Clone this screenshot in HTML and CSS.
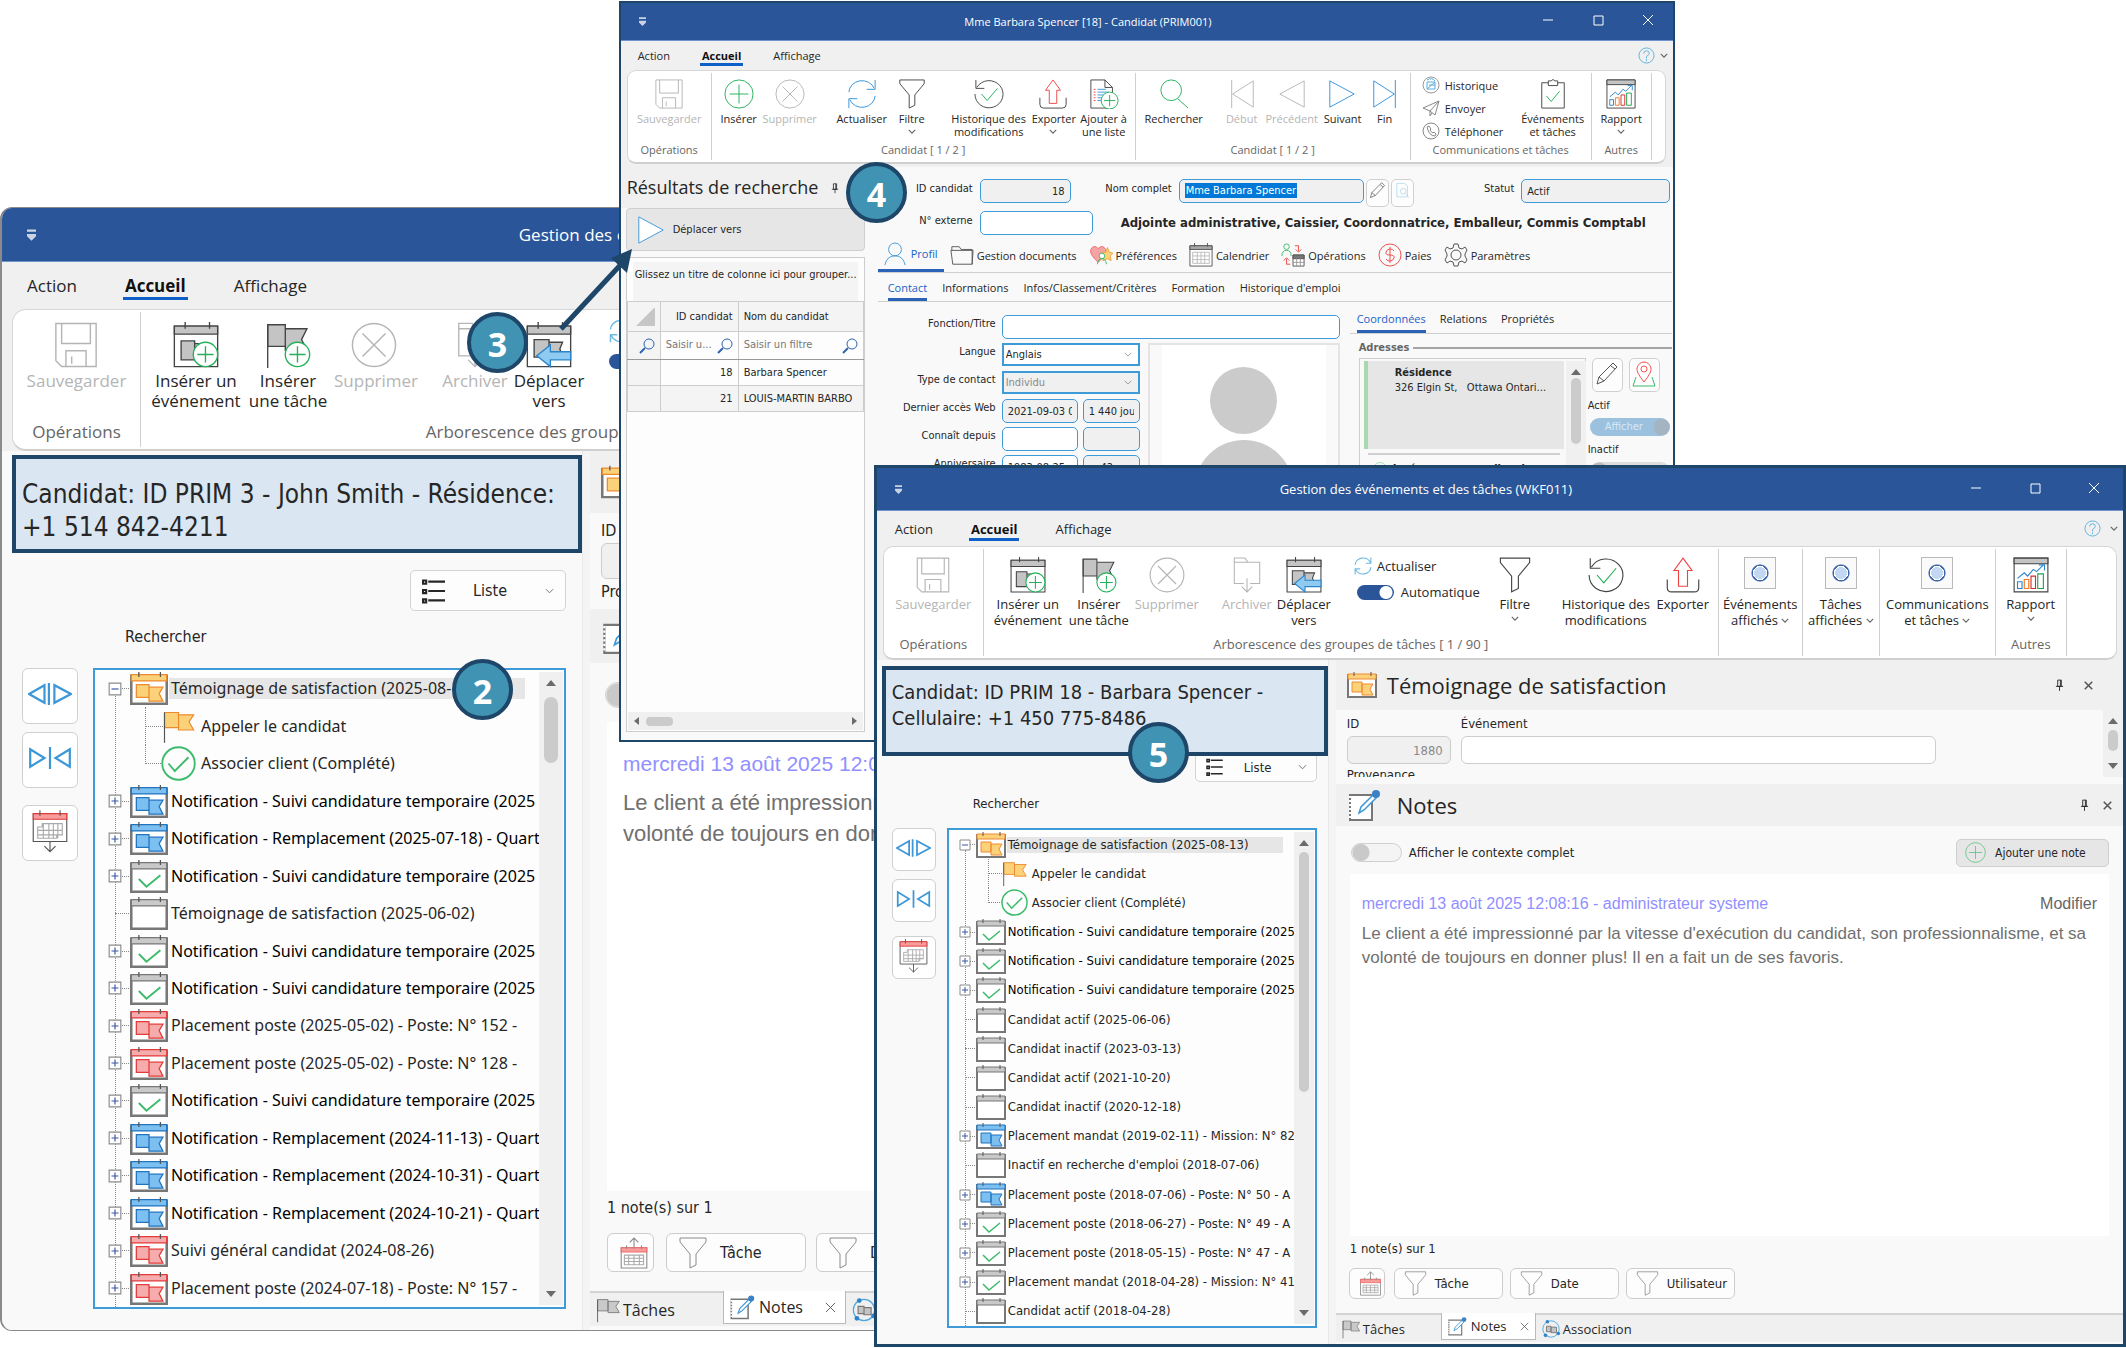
FILE: index.html
```html
<!DOCTYPE html>
<html lang="fr">
<head>
    <meta charset="UTF-8">
    <meta name="viewport" content="width=device-width, initial-scale=1.0">
    <title>Gestion des événements et des tâches</title>
    <link rel="stylesheet" href="styles.css">
</head>
<body>

    <!-- Icon set -->
    <svg class="sprite" aria-hidden="true">
        <symbol id="i-save" viewBox="0 0 32 32"><path d="M2 1h28v30H6l-4-4zM6 1v14h20V1M9 31V20h14v11M13 24v5"/></symbol>
        <symbol id="i-cancel" viewBox="0 0 32 32"><circle cx="16" cy="16" r="15"/><path d="M8 8l16 16M24 8L8 24"/></symbol>
        <symbol id="i-plus" viewBox="0 0 32 32"><circle cx="16" cy="16" r="15"/><path d="M16 6v20M6 16h20"/></symbol>
        <symbol id="i-cal-add" viewBox="0 0 34 34"><path fill="#fff" d="M1 3h32v30H1z"/><path fill="#c4c4c4" d="M1 3h32v6H1zM6 14h10v14H6zM16 16h10v9H16z"/><path d="M9 0v5M27 0v5"/><circle cx="24" cy="24" r="9" fill="#fff" stroke="#22b058"/><path stroke="#22b058" d="M24 18v12M18 24h12"/></symbol>
        <symbol id="i-flag-add" viewBox="0 0 34 34"><path fill="#c4c4c4" d="M2 2h13v16H2zM15 5h16l-4 8 4 8H15z"/><path d="M2 2v32"/><circle cx="24" cy="24" r="9" fill="#fff" stroke="#22b058"/><path stroke="#22b058" d="M24 18v12M18 24h12"/></symbol>
        <symbol id="i-archive" viewBox="0 0 32 34"><path d="M4 5V1h10l3 4h11v20h-9M13 25H4V5h24M16 20v12M11 28l5 5 5-5"/></symbol>
        <symbol id="i-cal-move" viewBox="0 0 34 34"><path fill="#fff" d="M1 3h32v30H1z"/><path fill="#c4c4c4" d="M1 3h32v6H1zM6 13h11v13H6zM17 15h10l-2 5 2 5H17z"/><path d="M9 0v5M27 0v5"/><path fill="#8fcaf0" stroke="#2b85cc" d="M8 25l10-8v5h15v6H18v5z"/></symbol>
        <symbol id="i-refresh" viewBox="0 0 32 32"><path d="M2 14A14 13 0 0 1 29 10M30 1v10H21M30 18A14 13 0 0 1 3 22M2 31V21h9"/></symbol>
        <symbol id="i-funnel" viewBox="0 0 32 32"><path d="M3 1h26v4L19 17v11l-6 3V17L3 5z"/></symbol>
        <symbol id="i-history" viewBox="0 0 32 32"><path d="M2 1v9h9M3 9A15 14.500 0 1 1 1 16"/><path stroke="#22b058" d="M8 16l6 7L25 10"/></symbol>
        <symbol id="i-export" viewBox="0 0 32 32"><path d="M2 20v7q0 4 4 4h20q4 0 4-4v-7"/><path stroke="#ef4444" d="M16 1l8 11h-4v14h-8V12H8z"/></symbol>
        <symbol id="i-doc-add" viewBox="0 0 32 32"><path d="M2 1h15l8 8v22H2zM17 1v8h8"/><path stroke="#3c97d8" d="M9 11h9M9 14h12M9 17h9M9 20h8M9 23h8"/><path stroke="#ef4444" d="M5 11h2M5 14h2M5 17h2M5 20h2M5 23h2"/><circle cx="22" cy="23" r="9" fill="#fff" stroke="#22b058"/><path stroke="#22b058" d="M22 17v12M16 23h12"/></symbol>
        <symbol id="i-search" viewBox="0 0 32 32"><circle cx="13" cy="12" r="11"/><path d="M20 21l11 10"/></symbol>
        <symbol id="i-filter-glass" viewBox="0 0 16 16"><circle cx="10" cy="6" r="5"/><path stroke-width="2" d="M6 10l-5 5"/></symbol>
        <symbol id="i-first" viewBox="0 0 32 32"><path d="M5 1v30M28 2v28L6 16z"/></symbol>
        <symbol id="i-prev" viewBox="0 0 32 32"><path d="M29 2v28L3 16z"/></symbol>
        <symbol id="i-next" viewBox="0 0 32 32"><path d="M3 2v28l26-14z"/></symbol>
        <symbol id="i-last" viewBox="0 0 32 32"><path d="M27 1v30M4 2v28l22-14z"/></symbol>
        <symbol id="i-clipboard" viewBox="0 0 32 32"><path d="M11 4H4v27h24V4h-7M11 2h3q2-3 4 0h3v5H11z"/><path stroke="#22b058" d="M9 18l5 6 9-11"/></symbol>
        <symbol id="i-report" viewBox="0 0 32 32"><path d="M1 1h30v30H1z"/><path fill="#c4c4c4" d="M1 1h30v5H1z"/><path stroke="#2b85cc" d="M4 22h4v6H4zM4 19l6-5 3 3 5-6 3 2 6-6M23 7h5v5"/><path stroke="#f0781e" d="M10 20h4v8h-4z"/><path stroke="#d92b2b" d="M16 17h4v11h-4z"/><path stroke="#22a050" d="M22 15h5v13h-5z"/></symbol>
        <symbol id="i-globe" viewBox="0 0 18 18"><circle cx="9" cy="9" r="8" stroke="#999"/><path stroke="#5badde" d="M5 6h8v7H5zM5 13l8-7M7 9h6M5 4q5-3 8 1"/></symbol>
        <symbol id="i-send" viewBox="0 0 18 18"><path d="M1 9l16-7-4 14-5-4zM17 2L8 12v5l2-3"/></symbol>
        <symbol id="i-phone" viewBox="0 0 18 18"><circle cx="9" cy="9" r="8"/><path d="M5 5l2-1 2 3-1 1q1 2 3 3l1-1 2 2-1 2Q7 14 5 5z"/></symbol>
        <symbol id="i-help" viewBox="0 0 18 18"><circle cx="9" cy="9" r="8"/><path d="M6 7q0-3 3-3t3 3q0 1-3 3v2M9 13v2"/></symbol>
        <symbol id="i-down" viewBox="0 0 10 6"><path d="M1 1l4 4 4-4"/></symbol>
        <symbol id="i-quick" viewBox="0 0 8 10"><path fill="currentColor" stroke="none" d="M0 0h8v2H0zM0 4h8v2L4 10 0 6z"/></symbol>
        <symbol id="i-min" viewBox="0 0 12 12"><path d="M1 6h10"/></symbol>
        <symbol id="i-max" viewBox="0 0 12 12"><path d="M2 2h9v9H2z"/></symbol>
        <symbol id="i-close" viewBox="0 0 12 12"><path d="M1 1l10 10M11 1L1 11"/></symbol>
        <symbol id="i-pin" viewBox="0 0 10 14"><path d="M3 1h4v7H3zM1 8h8M5 8v5M6 1v7"/></symbol>
        <symbol id="i-list" viewBox="0 0 22 24"><path d="M6 3h16M6 12h16M6 21h16M1 2h3v3H1zM1 11h3v3H1zM1 20h3v3H1z"/></symbol>
        <symbol id="i-split-out" viewBox="0 0 40 20"><path d="M1 10L15 2v16zM19 0v20M24 2v16l15-8z"/></symbol>
        <symbol id="i-split-in" viewBox="0 0 40 20"><path d="M2 2v16l13-8zM20 0v20M38 2v16l-13-8z"/></symbol>
        <symbol id="i-cal-down" viewBox="0 0 34 38"><path fill="#fff" d="M2 3h30v25H2z"/><path fill="#f79b9b" stroke="#e03a3a" d="M2 3h30v5H2z"/><path d="M8 0v5M26 0v5M17 28v9M12 32l5 5 5-5"/><path stroke="#aaa" d="M6 25V15h4v-3h18v10h-5v3zM6 18h22M6 22h22M11 12v13M16 12v13M20 12v13M24 12v13"/></symbol>
        <symbol id="i-cal-up" viewBox="0 0 28 30"><path fill="#fff" d="M2 10h24v19H2z"/><path fill="#f79b9b" stroke="#f06a6a" d="M2 10h24v4H2z"/><path d="M7 8v3M21 8v3M14 11V1M10 5l4-4 4 4"/><path stroke="#aaa" d="M5 26v-9h18v9zM5 20h18M5 23h18M9 17v9M14 17v9M19 17v9"/></symbol>
        <symbol id="i-box-minus" viewBox="0 0 12 12"><path fill="#fff" stroke="#8c8c8c" d="M1 1h10v10H1z"/><path stroke="#3a55a4" d="M3 6h6"/></symbol>
        <symbol id="i-box-plus" viewBox="0 0 12 12"><path fill="#fff" stroke="#8c8c8c" d="M1 1h10v10H1z"/><path stroke="#3a55a4" d="M3 6h6M6 3v6"/></symbol>
        <symbol id="i-cal" viewBox="0 0 30 26"><path fill="#fff" stroke="#777" stroke-width="2" d="M1 3h28v22H1z"/><path class="tone" d="M1 2h28v5H1z"/><path stroke="#555" d="M7 0v4M24 0v4"/></symbol>
        <symbol id="i-cal-flag" viewBox="0 0 30 26"><use href="#i-cal" width="30" height="26"/><path class="tone" d="M5 10h10v10H5zM15 12h11l-3 5 3 6H15z"/></symbol>
        <symbol id="i-cal-check" viewBox="0 0 30 26"><use href="#i-cal" width="30" height="26"/><path stroke="#3dbb6c" stroke-width="1.500" d="M7 15l6 6 11-9"/></symbol>
        <symbol id="i-flag" viewBox="0 0 30 28"><path class="tone" d="M3 2h12v13H3zM15 4h13l-4 6 4 7H15z"/><path stroke="#555" d="M3 2v26"/></symbol>
        <symbol id="i-done" viewBox="0 0 28 28"><circle cx="14" cy="14" r="13"/><path d="M6 14l5 6L22 9"/></symbol>
        <symbol id="i-note" viewBox="0 0 34 32"><path stroke="#777" fill="#fff" stroke-width="2" d="M3 6h22v25H3z"/><path stroke="#fff" stroke-dasharray="2 2" stroke-width="2" d="M3 7v23"/><path stroke="#3c97d8" fill="#fff" stroke-width="1.500" d="M12 24l2-6L26 6l3 3-12 12z"/><circle cx="29" cy="5" r="4" fill="#3b82c4" stroke="none"/></symbol>
        <symbol id="i-assoc" viewBox="0 0 22 22"><circle cx="11" cy="11" r="9" stroke="#4aa8e0"/><path fill="#c4c4c4" stroke="#777" d="M6 8h5v6H6zM11 9h6v6h-6z"/><circle cx="7" cy="3" r="2" fill="#2b85cc" stroke="none"/><circle cx="19" cy="16" r="2" fill="#2b85cc" stroke="none"/><circle cx="5" cy="18" r="2" fill="#2b85cc" stroke="none"/></symbol>
        <symbol id="i-user" viewBox="0 0 24 26"><circle cx="12" cy="8" r="7"/><path d="M1 25q2-10 11-10t11 10"/></symbol>
        <symbol id="i-folder" viewBox="0 0 26 22"><path d="M2 6V2h8l2 3h12v16H3L1 6h24l-1 15"/></symbol>
        <symbol id="i-heart" viewBox="0 0 26 24"><path fill="#f7a3a3" stroke="#ef6a6a" d="M10 20Q0 11 2 6q3-6 8-1 5-5 8 1 1 5-8 14z"/><path fill="#fbd27a" stroke="#f0a040" d="M20 4l2 5 4 1-3 3 1 5-4-2-5 2 1-5-3-3 5-1z"/><circle cx="14" cy="13" r="3" fill="#fff" stroke="#3dbb6c"/><path stroke="#3dbb6c" d="M9 22q1-6 5-6t5 6"/></symbol>
        <symbol id="i-calendar" viewBox="0 0 26 26"><path fill="#fff" d="M1 3h24v22H1z"/><path fill="#a9a9a9" d="M1 3h24v4H1z"/><path d="M6 0v4M20 0v4"/><path stroke="#bbb" d="M4 10h18v12H4zM4 14h18M4 18h18M9 10v12M13 10v12M17 10v12"/></symbol>
        <symbol id="i-ops" viewBox="0 0 26 26"><circle cx="6" cy="4" r="3" stroke="#3dbb6c"/><path stroke="#3dbb6c" d="M1 14q0-6 5-6t5 6"/><path stroke="#ef4444" d="M15 3h4v6M16 7l3 3 3-3M10 23H6v-6M3 19l3-3 3 3"/><path fill="#fff" d="M13 13h12v12H13z"/><path fill="#777" d="M13 13h12v4H13z"/><path stroke="#999" d="M17 17v8M21 17v8M13 21h12"/></symbol>
        <symbol id="i-dollar" viewBox="0 0 24 24"><circle cx="12" cy="12" r="11"/><path d="M16 8q-1-2-4-2t-4 3 4 3 4 3-4 3-4-2M12 4v16"/></symbol>
        <symbol id="i-gear" viewBox="0 0 24 24"><circle cx="12" cy="12" r="5"/><path d="M10 1h4l1 4 3 1 3-2 2 3-2 4v2l2 4-2 3-3-2-3 1-1 4h-4l-1-4-3-1-3 2-2-3 2-4v-2L1 7l2-3 3 2 3-1z"/></symbol>
        <symbol id="i-pencil" viewBox="0 0 24 24"><path d="M2 22l2-7L18 1l4 4L9 19zM4 15l5 4M16 4l4 3"/></symbol>
        <symbol id="i-doc-search" viewBox="0 0 24 24"><path d="M4 2h11l4 4v15H4z"/><circle cx="13" cy="13" r="4"/><path d="M16 16l5 6"/></symbol>
        <symbol id="i-map" viewBox="0 0 24 26"><path stroke="#3dbb6c" d="M4 16L1 25h22l-3-9"/><path stroke="#ef5350" fill="#fff" d="M12 21Q4 11 5 7q2-6 7-6t7 6q1 4-7 14z"/><circle cx="12" cy="8" r="3" stroke="#ef5350"/></symbol>
    </svg>

    <main class="desktop">

        <!-- Events window, John Smith -->
        <section class="window win-john">
            <header class="titlebar">
                <svg class="quick"><use href="#i-quick"/></svg>
                <h1>Gestion des événements et des tâches (WKF011)</h1>
            </header>
            <nav class="menu">
                <a href="#">Action</a>
                <a href="#" class="active">Accueil</a>
                <a href="#">Affichage</a>
            </nav>
            <div class="ribbon">
                <div class="group g-op">
                    <div class="tools"><button disabled><svg><use href="#i-save"/></svg>Sauvegarder</button></div>
                    <p>Opérations</p>
                </div>
                <div class="group g-tree">
                    <div class="tools">
                        <button><svg><use href="#i-cal-add"/></svg>Insérer un<br>événement</button>
                        <button><svg><use href="#i-flag-add"/></svg>Insérer<br>une tâche</button>
                        <button disabled><svg><use href="#i-cancel"/></svg>Supprimer</button>
                        <span></span>
                        <button disabled><svg><use href="#i-archive"/></svg>Archiver</button>
                        <button><svg><use href="#i-cal-move"/></svg>Déplacer<br>vers</button>
                        <span></span>
                        <div class="stack">
                            <button class="sky"><svg><use href="#i-refresh"/></svg></button>
                            <input type="checkbox" class="switch" checked aria-label="Automatique">
                        </div>
                    </div>
                    <p>Arborescence des groupes de tâches [ 1 / 90 ]</p>
                </div>
            </div>
            <div class="content">
                <div class="left">
                    <div class="callout">Candidat: ID PRIM 3 - John Smith - Résidence:<br>+1 514 842-4211</div>
                    <button class="list-btn"><svg><use href="#i-list"/></svg>Liste<svg class="down"><use href="#i-down"/></svg></button>
                    <p class="search-label">Rechercher</p>
                    <div class="tree-area">
                        <div class="rail">
                            <button aria-label="Développer"><svg><use href="#i-split-out"/></svg></button>
                            <button aria-label="Réduire"><svg><use href="#i-split-in"/></svg></button>
                            <button aria-label="Calendrier" class="cal-btn"><svg><use href="#i-cal-down"/></svg></button>
                        </div>
                        <div class="tree">
                            <ul>
                                <li><svg class="box"><use href="#i-box-minus"/></svg><svg class="orange"><use href="#i-cal-flag"/></svg><span class="selected">Témoignage de satisfaction (2025-08-13)</span></li>
                                <li class="child"><svg class="orange"><use href="#i-flag"/></svg><span>Appeler le candidat</span></li>
                                <li class="child last"><svg class="green"><use href="#i-done"/></svg><span>Associer client (Complété)</span></li>
                                <li class="bold"><svg class="box"><use href="#i-box-plus"/></svg><svg class="blue"><use href="#i-cal-flag"/></svg><span>Notification - Suivi candidature temporaire (2025</span></li>
                                <li class="bold"><svg class="box"><use href="#i-box-plus"/></svg><svg class="blue"><use href="#i-cal-flag"/></svg><span>Notification - Remplacement (2025-07-18) - Quart</span></li>
                                <li class="bold"><svg class="box"><use href="#i-box-plus"/></svg><svg class="grey"><use href="#i-cal-check"/></svg><span>Notification - Suivi candidature temporaire (2025</span></li>
                                <li class="leaf"><svg class="grey"><use href="#i-cal"/></svg><span>Témoignage de satisfaction (2025-06-02)</span></li>
                                <li class="bold"><svg class="box"><use href="#i-box-plus"/></svg><svg class="grey"><use href="#i-cal-check"/></svg><span>Notification - Suivi candidature temporaire (2025</span></li>
                                <li class="bold"><svg class="box"><use href="#i-box-plus"/></svg><svg class="grey"><use href="#i-cal-check"/></svg><span>Notification - Suivi candidature temporaire (2025</span></li>
                                <li><svg class="box"><use href="#i-box-plus"/></svg><svg class="red"><use href="#i-cal-flag"/></svg><span>Placement poste (2025-05-02) - Poste: N° 152 -</span></li>
                                <li><svg class="box"><use href="#i-box-plus"/></svg><svg class="red"><use href="#i-cal-flag"/></svg><span>Placement poste (2025-05-02) - Poste: N° 128 -</span></li>
                                <li class="bold"><svg class="box"><use href="#i-box-plus"/></svg><svg class="grey"><use href="#i-cal-check"/></svg><span>Notification - Suivi candidature temporaire (2025</span></li>
                                <li class="bold"><svg class="box"><use href="#i-box-plus"/></svg><svg class="blue"><use href="#i-cal-flag"/></svg><span>Notification - Remplacement (2024-11-13) - Quart</span></li>
                                <li class="bold"><svg class="box"><use href="#i-box-plus"/></svg><svg class="blue"><use href="#i-cal-flag"/></svg><span>Notification - Remplacement (2024-10-31) - Quart</span></li>
                                <li class="bold"><svg class="box"><use href="#i-box-plus"/></svg><svg class="blue"><use href="#i-cal-flag"/></svg><span>Notification - Remplacement (2024-10-21) - Quart</span></li>
                                <li><svg class="box"><use href="#i-box-plus"/></svg><svg class="red"><use href="#i-cal-flag"/></svg><span>Suivi général candidat (2024-08-26)</span></li>
                                <li><svg class="box"><use href="#i-box-plus"/></svg><svg class="red"><use href="#i-cal-flag"/></svg><span>Placement poste (2024-07-18) - Poste: N° 157 -</span></li>
                            </ul>
                            <div class="vscroll"><i></i></div>
                        </div>
                    </div>
                </div>
                <div class="splitter"></div>
                <div class="right">
                    <div class="panel-head"><svg class="orange"><use href="#i-cal-flag"/></svg></div>
                    <div class="event-form">
                        <div class="field id"><label for="john-id">ID</label><input id="john-id" readonly></div>
                        <p class="cut">Provenance</p>
                    </div>
                    <div class="panel-head notes-head"><svg><use href="#i-note"/></svg></div>
                    <div class="note-tools"><input type="checkbox" class="switch" aria-label="Afficher le contexte complet"></div>
                    <article class="note">
                        <h3>mercredi 13 août 2025 12:08</h3>
                        <p>Le client a été impressionné<br>volonté de toujours en donner</p>
                    </article>
                    <p class="count">1 note(s) sur 1</p>
                    <div class="filters">
                        <button class="square" aria-label="Calendrier"><svg><use href="#i-cal-up"/></svg></button>
                        <button><svg><use href="#i-funnel"/></svg>Tâche</button>
                        <button><svg><use href="#i-funnel"/></svg>Date</button>
                    </div>
                    <nav class="tabs">
                        <a href="#"><svg class="grey"><use href="#i-flag"/></svg>Tâches</a>
                        <a href="#" class="active"><svg><use href="#i-note"/></svg>Notes<svg class="x"><use href="#i-close"/></svg></a>
                        <a href="#"><svg><use href="#i-assoc"/></svg></a>
                    </nav>
                </div>
            </div>
        </section>

        <!-- Candidate window -->
        <section class="window win-candidate">
            <header class="titlebar">
                <svg class="quick"><use href="#i-quick"/></svg>
                <h1>Mme Barbara Spencer [18] - Candidat (PRIM001)</h1>
                <div class="controls">
                    <button aria-label="Réduire"><svg><use href="#i-min"/></svg></button>
                    <button aria-label="Agrandir"><svg><use href="#i-max"/></svg></button>
                    <button aria-label="Fermer"><svg><use href="#i-close"/></svg></button>
                </div>
            </header>
            <nav class="menu">
                <a href="#">Action</a>
                <a href="#" class="active">Accueil</a>
                <a href="#">Affichage</a>
                <span class="help"><svg><use href="#i-help"/></svg><svg class="down"><use href="#i-down"/></svg></span>
            </nav>
            <div class="ribbon">
                <div class="group g-op">
                    <div class="tools"><button disabled><svg><use href="#i-save"/></svg>Sauvegarder</button></div>
                    <p>Opérations</p>
                </div>
                <div class="group g-cand">
                    <div class="tools">
                        <button class="green"><svg><use href="#i-plus"/></svg>Insérer</button>
                        <button disabled><svg><use href="#i-cancel"/></svg>Supprimer</button>
                        <span></span>
                        <button class="blue"><svg><use href="#i-refresh"/></svg>Actualiser</button>
                        <button><svg><use href="#i-funnel"/></svg>Filtre<svg class="down"><use href="#i-down"/></svg></button>
                        <span></span>
                        <button><svg><use href="#i-history"/></svg>Historique des<br>modifications</button>
                        <button><svg><use href="#i-export"/></svg>Exporter<svg class="down"><use href="#i-down"/></svg></button>
                        <button><svg><use href="#i-doc-add"/></svg>Ajouter à<br>une liste</button>
                    </div>
                    <p>Candidat [ 1 / 2 ]</p>
                </div>
                <div class="group g-nav">
                    <div class="tools">
                        <button class="green"><svg><use href="#i-search"/></svg>Rechercher</button>
                        <span></span>
                        <button disabled><svg><use href="#i-first"/></svg>Début</button>
                        <button disabled><svg><use href="#i-prev"/></svg>Précédent</button>
                        <button class="blue"><svg><use href="#i-next"/></svg>Suivant</button>
                        <button class="blue"><svg><use href="#i-last"/></svg>Fin</button>
                    </div>
                    <p>Candidat [ 1 / 2 ]</p>
                </div>
                <div class="group g-com">
                    <div class="tools">
                        <div class="stack">
                            <button><svg><use href="#i-globe"/></svg>Historique</button>
                            <button class="soft"><svg><use href="#i-send"/></svg>Envoyer</button>
                            <button class="soft"><svg><use href="#i-phone"/></svg>Téléphoner</button>
                        </div>
                        <button><svg><use href="#i-clipboard"/></svg>Événements<br>et tâches</button>
                    </div>
                    <p>Communications et tâches</p>
                </div>
                <div class="group g-rep">
                    <div class="tools"><button><svg><use href="#i-report"/></svg>Rapport<svg class="down"><use href="#i-down"/></svg></button></div>
                    <p>Autres</p>
                </div>
            </div>
            <div class="content">
                <div class="results">
                    <h2>Résultats de recherche <svg><use href="#i-pin"/></svg></h2>
                    <button class="move"><svg><use href="#i-next"/></svg>Déplacer vers</button>
                    <div class="grid-box">
                        <p class="group-hint">Glissez un titre de colonne ici pour grouper...</p>
                        <table>
                            <thead>
                                <tr><th class="corner"><i></i></th><th class="num">ID candidat</th><th>Nom du candidat</th></tr>
                                <tr class="filter"><td class="rowhead"><svg><use href="#i-filter-glass"/></svg></td><td>Saisir u... <svg><use href="#i-filter-glass"/></svg></td><td>Saisir un filtre <svg><use href="#i-filter-glass"/></svg></td></tr>
                            </thead>
                            <tbody>
                                <tr><td class="rowhead"></td><td class="num">18</td><td>Barbara Spencer</td></tr>
                                <tr class="alt"><td class="rowhead"></td><td class="num">21</td><td>LOUIS-MARTIN BARBO</td></tr>
                            </tbody>
                        </table>
                        <div class="hscroll"><i></i></div>
                    </div>
                </div>
                <div class="details">
                    <div class="ident">
                        <label for="cid">ID candidat</label><input id="cid" class="num" value="18" readonly>
                        <label for="cname">Nom complet</label>
                        <div class="pair">
                            <div class="namebox" id="cname" role="textbox"><mark>Mme Barbara Spencer</mark></div>
                            <button aria-label="Modifier"><svg><use href="#i-pencil"/></svg></button>
                            <button aria-label="Aperçu" class="sky"><svg><use href="#i-doc-search"/></svg></button>
                        </div>
                        <label for="cstat">Statut</label><input id="cstat" value="Actif" readonly>
                    </div>
                    <div class="ident second">
                        <label for="cext">N° externe</label><input id="cext">
                        <strong>Adjointe administrative, Caissier, Coordonnatrice, Emballeur, Commis Comptabl</strong>
                    </div>
                    <nav class="main-tabs">
                        <a href="#" class="active"><svg><use href="#i-user"/></svg>Profil</a>
                        <a href="#"><svg><use href="#i-folder"/></svg>Gestion documents</a>
                        <a href="#"><svg><use href="#i-heart"/></svg>Préférences</a>
                        <a href="#"><svg><use href="#i-calendar"/></svg>Calendrier</a>
                        <a href="#"><svg><use href="#i-ops"/></svg>Opérations</a>
                        <a href="#" class="pay"><svg><use href="#i-dollar"/></svg>Paies</a>
                        <a href="#"><svg><use href="#i-gear"/></svg>Paramètres</a>
                    </nav>
                    <nav class="sub-tabs">
                        <a href="#" class="active">Contact</a>
                        <a href="#">Informations</a>
                        <a href="#">Infos/Classement/Critères</a>
                        <a href="#">Formation</a>
                        <a href="#">Historique d'emploi</a>
                    </nav>
                    <div class="profile">
                        <div class="form">
                            <label for="f1">Fonction/Titre</label><input id="f1" class="wide">
                            <label for="f2">Langue</label><select id="f2"><option>Anglais</option></select>
                            <label for="f3">Type de contact</label><select id="f3" disabled><option>Individu</option></select>
                            <label for="f4">Dernier accès Web</label><div class="two"><input id="f4" value="2021-09-03 08:15" readonly><input value="1 440 jours" aria-label="Jours" readonly></div>
                            <label for="f5">Connaît depuis</label><div class="two"><input id="f5"><input aria-label="Durée" readonly></div>
                            <label for="f6">Anniversaire</label><div class="two"><input id="f6" value="1983-08-25"><input class="num" value="42 ans" aria-label="Âge" readonly></div>
                            <div class="photo"><div><i></i><b></b></div></div>
                        </div>
                        <div class="coords">
                            <nav class="sub-tabs">
                                <a href="#" class="active">Coordonnées</a>
                                <a href="#">Relations</a>
                                <a href="#">Propriétés</a>
                            </nav>
                            <h4>Adresses</h4>
                            <div class="addr-row">
                                <div class="addr-list">
                                    <div class="items">
                                        <div class="item"><b>Résidence</b><br>326 Elgin St, &nbsp; Ottawa Ontari...</div>
                                        <div class="more"><svg><use href="#i-plus"/></svg>Insérer une nouvelle adresse</div>
                                    </div>
                                    <div class="vscroll"><i></i></div>
                                </div>
                                <div class="addr-side">
                                    <button aria-label="Modifier"><svg><use href="#i-pencil"/></svg></button>
                                    <button aria-label="Carte"><svg><use href="#i-map"/></svg></button>
                                    <p>Actif</p>
                                    <button class="pill">Afficher</button>
                                    <p>Inactif</p>
                                    <button class="pill off" aria-label="Inactif"></button>
                                </div>
                            </div>
                        </div>
                    </div>
                </div>
            </div>
        </section>

        <!-- Events window, Barbara Spencer -->
        <section class="window win-barbara">
            <header class="titlebar">
                <svg class="quick"><use href="#i-quick"/></svg>
                <h1>Gestion des événements et des tâches (WKF011)</h1>
                <div class="controls">
                    <button aria-label="Réduire"><svg><use href="#i-min"/></svg></button>
                    <button aria-label="Agrandir"><svg><use href="#i-max"/></svg></button>
                    <button aria-label="Fermer"><svg><use href="#i-close"/></svg></button>
                </div>
            </header>
            <nav class="menu">
                <a href="#">Action</a>
                <a href="#" class="active">Accueil</a>
                <a href="#">Affichage</a>
                <span class="help"><svg><use href="#i-help"/></svg><svg class="down"><use href="#i-down"/></svg></span>
            </nav>
            <div class="ribbon">
                <div class="group g-op">
                    <div class="tools"><button disabled><svg><use href="#i-save"/></svg>Sauvegarder</button></div>
                    <p>Opérations</p>
                </div>
                <div class="group g-tree">
                    <div class="tools">
                        <button><svg><use href="#i-cal-add"/></svg>Insérer un<br>événement</button>
                        <button><svg><use href="#i-flag-add"/></svg>Insérer<br>une tâche</button>
                        <button disabled><svg><use href="#i-cancel"/></svg>Supprimer</button>
                        <span></span>
                        <button disabled><svg><use href="#i-archive"/></svg>Archiver</button>
                        <button><svg><use href="#i-cal-move"/></svg>Déplacer<br>vers</button>
                        <span></span>
                        <div class="stack">
                            <button class="sky"><svg><use href="#i-refresh"/></svg>Actualiser</button>
                            <label><input type="checkbox" class="switch" checked>Automatique</label>
                        </div>
                        <button><svg><use href="#i-funnel"/></svg>Filtre<svg class="down"><use href="#i-down"/></svg></button>
                        <span></span>
                        <button><svg><use href="#i-history"/></svg>Historique des<br>modifications</button>
                        <button><svg><use href="#i-export"/></svg>Exporter</button>
                    </div>
                    <p>Arborescence des groupes de tâches [ 1 / 90 ]</p>
                </div>
                <div class="group g-ev">
                    <div class="tools"><button><i class="dot"></i>Événements<br>affichés <svg class="down"><use href="#i-down"/></svg></button></div>
                </div>
                <div class="group g-ta">
                    <div class="tools"><button><i class="dot"></i>Tâches<br>affichées <svg class="down"><use href="#i-down"/></svg></button></div>
                </div>
                <div class="group g-co">
                    <div class="tools"><button><i class="dot"></i>Communications<br>et tâches <svg class="down"><use href="#i-down"/></svg></button></div>
                </div>
                <div class="group g-rep">
                    <div class="tools"><button><svg><use href="#i-report"/></svg>Rapport<br><svg class="down"><use href="#i-down"/></svg></button></div>
                    <p>Autres</p>
                </div>
            </div>
            <div class="content">
                <div class="left">
                    <div class="callout">Candidat: ID PRIM 18 - Barbara Spencer -<br>Cellulaire: +1 450 775-8486</div>
                    <button class="list-btn"><svg><use href="#i-list"/></svg>Liste<svg class="down"><use href="#i-down"/></svg></button>
                    <p class="search-label">Rechercher</p>
                    <div class="tree-area">
                        <div class="rail">
                            <button aria-label="Développer"><svg><use href="#i-split-out"/></svg></button>
                            <button aria-label="Réduire"><svg><use href="#i-split-in"/></svg></button>
                            <button aria-label="Calendrier" class="cal-btn"><svg><use href="#i-cal-down"/></svg></button>
                        </div>
                        <div class="tree">
                            <ul>
                                <li><svg class="box"><use href="#i-box-minus"/></svg><svg class="orange"><use href="#i-cal-flag"/></svg><span class="selected">Témoignage de satisfaction (2025-08-13)</span></li>
                                <li class="child"><svg class="orange"><use href="#i-flag"/></svg><span>Appeler le candidat</span></li>
                                <li class="child last"><svg class="green"><use href="#i-done"/></svg><span>Associer client (Complété)</span></li>
                                <li class="bold"><svg class="box"><use href="#i-box-plus"/></svg><svg class="grey"><use href="#i-cal-check"/></svg><span>Notification - Suivi candidature temporaire (2025</span></li>
                                <li class="bold"><svg class="box"><use href="#i-box-plus"/></svg><svg class="grey"><use href="#i-cal-check"/></svg><span>Notification - Suivi candidature temporaire (2025</span></li>
                                <li class="bold"><svg class="box"><use href="#i-box-plus"/></svg><svg class="grey"><use href="#i-cal-check"/></svg><span>Notification - Suivi candidature temporaire (2025</span></li>
                                <li class="leaf"><svg class="grey"><use href="#i-cal"/></svg><span>Candidat actif (2025-06-06)</span></li>
                                <li class="leaf"><svg class="grey"><use href="#i-cal"/></svg><span>Candidat inactif (2023-03-13)</span></li>
                                <li class="leaf"><svg class="grey"><use href="#i-cal"/></svg><span>Candidat actif (2021-10-20)</span></li>
                                <li class="leaf"><svg class="grey"><use href="#i-cal"/></svg><span>Candidat inactif (2020-12-18)</span></li>
                                <li><svg class="box"><use href="#i-box-plus"/></svg><svg class="blue"><use href="#i-cal-flag"/></svg><span>Placement mandat (2019-02-11) - Mission: N° 82</span></li>
                                <li class="leaf"><svg class="grey"><use href="#i-cal"/></svg><span>Inactif en recherche d'emploi (2018-07-06)</span></li>
                                <li><svg class="box"><use href="#i-box-plus"/></svg><svg class="blue"><use href="#i-cal-flag"/></svg><span>Placement poste (2018-07-06) - Poste: N° 50 - A</span></li>
                                <li><svg class="box"><use href="#i-box-plus"/></svg><svg class="grey"><use href="#i-cal-check"/></svg><span>Placement poste (2018-06-27) - Poste: N° 49 - A</span></li>
                                <li><svg class="box"><use href="#i-box-plus"/></svg><svg class="grey"><use href="#i-cal-check"/></svg><span>Placement poste (2018-05-15) - Poste: N° 47 - A</span></li>
                                <li><svg class="box"><use href="#i-box-plus"/></svg><svg class="grey"><use href="#i-cal-check"/></svg><span>Placement mandat (2018-04-28) - Mission: N° 41</span></li>
                                <li class="leaf"><svg class="grey"><use href="#i-cal"/></svg><span>Candidat actif (2018-04-28)</span></li>
                            </ul>
                            <div class="vscroll"><i></i></div>
                        </div>
                    </div>
                </div>
                <div class="splitter"></div>
                <div class="right">
                    <div class="panel-head">
                        <svg class="orange"><use href="#i-cal-flag"/></svg>
                        <h2>Témoignage de satisfaction</h2>
                        <svg class="pin"><use href="#i-pin"/></svg>
                        <svg class="x"><use href="#i-close"/></svg>
                    </div>
                    <div class="event-form">
                        <div class="field id"><label for="ev-id">ID</label><input id="ev-id" value="1880" readonly></div>
                        <div class="field name"><label for="ev-name">Événement</label><input id="ev-name"></div>
                        <div class="vscroll"><i></i></div>
                        <p class="cut">Provenance</p>
                    </div>
                    <div class="panel-head notes-head">
                        <svg><use href="#i-note"/></svg>
                        <h2>Notes</h2>
                        <svg class="pin"><use href="#i-pin"/></svg>
                        <svg class="x"><use href="#i-close"/></svg>
                    </div>
                    <div class="note-tools">
                        <label><input type="checkbox" class="switch">Afficher le contexte complet</label>
                        <button><svg><use href="#i-plus"/></svg>Ajouter une note</button>
                    </div>
                    <article class="note">
                        <h3>mercredi 13 août 2025 12:08:16 - administrateur systeme <a href="#">Modifier</a></h3>
                        <p>Le client a été impressionné par la vitesse d'exécution du candidat, son professionnalisme, et sa volonté de toujours en donner plus! Il en a fait un de ses favoris.</p>
                    </article>
                    <p class="count">1 note(s) sur 1</p>
                    <div class="filters">
                        <button class="square" aria-label="Calendrier"><svg><use href="#i-cal-up"/></svg></button>
                        <button><svg><use href="#i-funnel"/></svg>Tâche</button>
                        <button><svg><use href="#i-funnel"/></svg>Date</button>
                        <button><svg><use href="#i-funnel"/></svg>Utilisateur</button>
                    </div>
                    <nav class="tabs">
                        <a href="#"><svg class="grey"><use href="#i-flag"/></svg>Tâches</a>
                        <a href="#" class="active"><svg><use href="#i-note"/></svg>Notes<svg class="x"><use href="#i-close"/></svg></a>
                        <a href="#"><svg><use href="#i-assoc"/></svg>Association</a>
                    </nav>
                </div>
            </div>
        </section>

        <!-- Step markers -->
        <svg class="arrow" viewBox="0 0 80 90"><path d="M5 83L69 14"/><path class="tip" d="M76 3L55 12l16 15z"/></svg>
        <span class="badge b2">2</span>
        <span class="badge b3">3</span>
        <span class="badge b4">4</span>
        <span class="badge b5">5</span>
    </main>

</body>
</html>
```
FILE: styles.css
```css
* {
    box-sizing: border-box;
}

body {
    margin: 0;
    background: #fff;
    color: #262626;
    font-family: "Open Sans", "Noto Sans", sans-serif;
}

h1, h2, h3, h4, p, ul {
    margin: 0;
    padding: 0;
    font-weight: normal;
}

a {
    color: inherit;
    text-decoration: none;
}

button, input, select {
    margin: 0;
    font: inherit;
    color: inherit;
}

button {
    padding: 0;
    border: 0;
    background: none;
}

svg {
    fill: none;
    stroke: currentColor;
    flex: none;
}

.sprite {
    position: absolute;
    width: 0;
    height: 0;
}

/* icon tones */
.tone { fill: var(--tone-fill, #c9c9c9); stroke: var(--tone, #777); }
.orange { --tone: #ee8a2e; --tone-fill: #fbd27a; }
svg.blue { --tone: #2273bd; --tone-fill: #7cc0f2; }
.red { --tone: #e23b3b; --tone-fill: #f6acac; }

.desktop {
    position: relative;
    height: 100vh;
    overflow: hidden;
}

/* ---------- windows ---------- */
.window {
    position: absolute;
    display: flex;
    flex-direction: column;
    background: #f0f0f0;
    border: 3px solid #1d4668;
    overflow: hidden;
    font-size: var(--fs);
    --tahoma: "DejaVu Sans Condensed", "Open Sans", sans-serif;
}

.win-john {
    left: 0;
    top: 207px;
    bottom: 17px;
    width: 69%;
    border: 1px solid #8a8a8a;
    border-left-width: 2px;
    border-radius: 12px;
    --fs: 17px;
    --tree: 16px;
    --bar: 54px;
    --menu: 47px;
    --icon: 46px;
    --line: 20px;
    --cal: 38px;
    --box: 14px;
}

.win-candidate {
    left: 29.1%;
    top: 1px;
    width: 49.7%;
    height: 55%;
    border-width: 2px;
    --fs: 11px;
    --bar: 38px;
    --menu: 29px;
    --icon: 30px;
    --line: 13px;
}

.win-barbara {
    left: 41.1%;
    right: 0;
    top: 465px;
    bottom: 1px;
    --fs: 13px;
    --tree: 13px;
    --bar: 43px;
    --menu: 35px;
    --icon: 36px;
    --line: 16px;
    --cal: 30px;
    --box: 12px;
}

.titlebar {
    height: var(--bar);
    flex: none;
    display: grid;
    grid-template-columns: 28px 1fr 176px;
    align-items: center;
    background: #2a5699;
    border-bottom: 1px solid #6f93cc;
    color: #fff;
}

.win-candidate .titlebar { grid-template-columns: 32px 1fr 150px; }
.win-john .titlebar { grid-template-columns: 40px 1fr 88px; }

.titlebar h1 {
    font-size: inherit;
    text-align: center;
}

.quick {
    width: 7px;
    height: 9px;
    margin-left: 18px;
    color: #c9d3e4;
}

.win-john .quick { margin-left: 25px; width: 9px; height: 12px; }

.controls {
    display: grid;
    grid-template-columns: repeat(3, 1fr);
    height: 100%;
}

.controls svg { width: 12px; height: 12px; }
.controls button { color: #fff; }

.menu {
    height: var(--menu);
    flex: none;
    display: flex;
    align-items: center;
    gap: 32px;
    padding: 0 5px 0 17px;
}

.win-john .menu { gap: 48px; padding-left: 25px; }
.win-barbara .menu { gap: 38px; padding-left: 18px; }

.menu .active {
    font-weight: bold;
    color: #111;
    position: relative;
}

.menu .active::after {
    content: "";
    position: absolute;
    left: -2px;
    right: -2px;
    bottom: -3px;
    height: 3px;
    background: #0f5fc8;
}

.help {
    margin-left: auto;
    display: flex;
    align-items: center;
    gap: 5px;
    color: #5fb0de;
}

.win-barbara .help { gap: 9px; }

.help svg { width: 17px; height: 17px; }

svg.down {
    width: 8px;
    height: 5px;
    color: #666;
    stroke-width: 1.500;
}

/* ---------- ribbon ---------- */
.ribbon {
    display: flex;
    flex: none;
    height: 94px;
    margin: 0 7px 0 6px;
    background: #fff;
    border: 1px solid #d6d6d6;
    border-bottom: 2px solid #cfcfcf;
    border-radius: 9px;
    padding: 2px 0;
}

.win-john .ribbon { height: 142px; margin: 0 10px; border-radius: 14px; }
.win-barbara .ribbon { height: 114px; margin: 0 6px; border-radius: 10px; }

.group {
    display: flex;
    flex-direction: column;
    border-right: 1px solid #cfcfcf;
}

.tools {
    flex: 1;
    display: grid;
    justify-content: center;
    align-items: start;
    padding-top: 6px;
}

.win-john .tools { padding-top: 10px; }
.win-barbara .tools { padding-top: 8px; }

.group > p {
    text-align: center;
    color: #666;
    line-height: 20px;
}

.win-john .group > p { line-height: 30px; }
.win-barbara .group > p { line-height: 24px; }

.tools button {
    line-height: var(--line);
    white-space: nowrap;
    text-align: center;
}

.tools button > svg:first-child {
    display: block;
    width: var(--icon);
    height: var(--icon);
    margin: 0 auto 3px;
    color: #444;
}

.tools button:disabled, .tools button:disabled > svg:first-child { color: #b5b5b5; }
.tools .green > svg:first-child { color: #22b058; }
.tools .blue > svg:first-child { color: #3091d8; }
.tools .sky > svg:first-child { color: #6fbbe6; stroke-width: 2; }

.win-candidate .tools svg.down, .g-rep svg.down, .g-tree svg.down {
    display: block;
    margin: 4px auto;
}

.g-ev svg.down, .g-ta svg.down, .g-co svg.down { vertical-align: 2px; }

.dot {
    display: block;
    width: 32px;
    height: 32px;
    margin: 0 auto 7px;
    border: 1px solid #b9b9b9;
    background: #fafafa radial-gradient(circle, #c3d6f2 6px, #fff 6px, #fff 7px, #3c66ae 7px, #3c66ae 8px, transparent 9px);
}

.win-john .g-op { width: 128px; }
.win-john .g-tree { width: 930px; }
.win-john .g-tree .tools { grid-template-columns: 92px 92px 80px 25px 72px 76px 14px 90px; justify-content: start; padding-left: 9px; }
.win-barbara .g-op { width: 100px; }
.win-barbara .g-tree { width: 735px; }
.win-barbara .g-tree .tools { grid-template-columns: 74px 68px 68px 17px 58px 56px 22px 134px 54px 14px 100px 54px; justify-content: start; padding-left: 7px; }
.win-barbara .g-ev { width: 84px; }
.win-barbara .g-ta { width: 77px; }
.win-barbara .g-co { width: 116px; }
.win-barbara .g-rep { width: 71px; }
.win-candidate .g-op { width: 84px; }
.win-candidate .g-cand { width: 424px; }
.win-candidate .g-cand .tools { grid-template-columns: 44px 58px 16px 54px 46px 11px 86px 42px 60px; justify-content: start; padding-left: 5px; }
.win-candidate .g-nav { width: 275px; }
.win-candidate .g-nav .tools { grid-template-columns: 66px 17px 36px 64px 36px 50px; justify-content: start; padding-left: 5px; }
.win-candidate .g-com { width: 181px; }
.win-candidate .g-com .tools { grid-template-columns: 96px 70px; justify-content: start; padding-left: 11px; }
.win-candidate .g-rep { width: 60px; }

.stack {
    display: grid;
    gap: 5px;
    justify-items: start;
}

.stack button, .stack label {
    display: flex;
    align-items: center;
    gap: 5px;
    height: 18px;
}

.stack button > svg:first-child { width: 18px; height: 18px; margin: 0; color: #888; }
.stack .sky > svg:first-child { color: #6fbbe6; }
.win-candidate .stack { margin-top: -3px; }
.win-barbara .stack { gap: 8px; }
.win-barbara .stack label { margin-left: 3px; gap: 7px; }
.win-john .stack { padding-left: 8px; gap: 14px; }
.win-john .stack button > svg:first-child { width: 24px; height: 24px; }

.switch {
    appearance: none;
    width: 37px;
    height: 15px;
    border-radius: 8px;
    background: radial-gradient(circle at 29px 50%, #fff 6px, #2a5699 7px);
}

/* ---------- event windows ---------- */
.content {
    flex: 1;
    display: flex;
    min-height: 0;
}

.left {
    width: 451px;
    flex: none;
    display: flex;
    flex-direction: column;
    background: #f9f9f9;
    font-family: var(--tahoma);
    font-size: var(--tree);
    padding: 6px 0 16px 5px;
}

.win-john .left { width: 580px; padding: 4px 0 21px 10px; }

.callout {
    position: relative;
    z-index: 1;
    flex: none;
    height: 90px;
    padding: 9px 6px;
    border: 4px solid #1d4668;
    background: #dae6f2;
    font-size: 20px;
    line-height: 26px;
    white-space: nowrap;
}

.win-john .callout { height: 98px; padding: 19px 6px; font-size: 26px; line-height: 33px; }

.list-btn {
    align-self: flex-end;
    flex: none;
    display: flex;
    align-items: center;
    gap: 20px;
    width: 122px;
    height: 30px;
    margin: -4px 11px 0 0;
    padding: 0 9px;
    border: 1px solid #d3d3d3;
    border-radius: 5px;
    background: #fdfdfd;
}

.list-btn svg { width: 19px; height: 18px; stroke-width: 2; }
.list-btn svg.down { width: 9px; height: 6px; margin-left: auto; stroke-width: 1; }
.win-john .list-btn { width: 156px; height: 41px; margin: 17px 16px 0 0; padding: 0 11px; gap: 28px; }
.win-john .list-btn svg:first-child { width: 23px; height: 26px; }

.search-label {
    padding-left: 91px;
    height: 46px;
    line-height: 43px;
    flex: none;
}

.win-john .search-label { padding-left: 113px; height: 57px; line-height: 52px; }

.tree-area {
    flex: 1;
    display: flex;
    gap: 11px;
    padding: 0 11px 0 10px;
    min-height: 0;
}

.win-john .tree-area { gap: 15px; padding: 0 16px 0 10px; }

.rail {
    display: grid;
    gap: 8px;
    align-content: start;
}

.rail button {
    width: 44px;
    height: 43px;
    border: 1px solid #d0d0d0;
    border-radius: 6px;
    background: #fff;
    color: #3c97d8;
}

.rail svg { width: 35px; height: 18px; stroke-width: 2; }
.rail .cal-btn { margin-top: 6px; color: #555; }
.rail .cal-btn svg { width: 31px; height: 34px; stroke-width: 1; }
.win-john .rail button { width: 56px; height: 56px; }
.win-john .rail svg { width: 44px; height: 22px; }
.win-john .rail .cal-btn { margin-top: 9px; }
.win-john .rail .cal-btn svg { width: 38px; height: 43px; }

.tree {
    flex: 1;
    display: flex;
    min-width: 0;
    border: 2px solid #3f9ad8;
    background: #fdfdfd;
}

.tree ul {
    flex: 1;
    min-width: 0;
    display: flex;
    flex-direction: column;
    position: relative;
    list-style: none;
    overflow: hidden;
}

/* dotted trunk of the tree */
.tree ul::before {
    content: "";
    position: absolute;
    left: 16px;
    top: 20px;
    bottom: 0;
    border-left: 1px dotted #888;
}

.win-john .tree ul::before { left: 20px; }

.tree li {
    position: relative;
    flex: 1;
    display: flex;
    align-items: center;
    min-height: 0;
    padding-left: calc(16px - var(--box) / 2);
    white-space: nowrap;
}

.win-john .tree li { padding-left: 13px; }

.tree li > svg { width: var(--cal); height: 28px; position: relative; }
.win-john .tree li > svg { height: 35px; }
.tree li > svg.box { width: var(--box); height: var(--box); margin-right: 5px; }
.win-john .tree li > svg.box { margin-right: 8px; }

.tree li::before {
    content: "";
    position: absolute;
    left: 16px;
    width: 14px;
    border-top: 1px dotted #888;
}

.win-john .tree li::before { left: 20px; width: 18px; }
.tree li.leaf { padding-left: 27px; }
.win-john .tree li.leaf { padding-left: 35px; }
.tree li.child { padding-left: 52px; }
.win-john .tree li.child { padding-left: 66px; }
.tree li.child::before { left: 39px; }
.win-john .tree li.child::before { left: 50px; }
.tree li.child > svg { width: 27px; height: 27px; margin-right: 2px; }
.win-john .tree li.child > svg { width: 35px; height: 35px; }

.tree li.child::after {
    content: "";
    position: absolute;
    left: 39px;
    top: 0;
    bottom: 0;
    border-left: 1px dotted #888;
}

.win-john .tree li.child::after { left: 50px; }
.tree li.child.last::after { bottom: 50%; }
.tree .green { color: #3dbb6c; stroke-width: 1.500; }

.tree li span {
    margin-left: 1px;
    padding-left: 1px;
    line-height: 16px;
}

.win-john .tree li span { line-height: 21px; font-family: "Noto Sans", sans-serif; padding-left: 2px; }
.tree li.bold span { color: #000; }
.tree .selected { flex: 1; background: #e6e6e6; margin-right: 11px; }
.win-john .tree .selected { margin-right: 14px; }

.vscroll {
    position: relative;
    width: 20px;
    flex: none;
    background: #f0f0f0;
    padding: 20px 5px;
}

.vscroll i {
    display: block;
    height: 53%;
    border-radius: 5px;
    background: #cbcbcb;
}

.vscroll::before, .vscroll::after {
    content: "";
    position: absolute;
    left: 50%;
    margin-left: -5px;
    top: 8px;
    border: 5px solid transparent;
    border-top-width: 0;
    border-bottom: 6px solid #6b6b6b;
}

.vscroll::after {
    top: auto;
    bottom: 8px;
    border-bottom-width: 0;
    border-top: 6px solid #6b6b6b;
}

.tree .vscroll { margin: 2px 1px 2px 0; }
.win-john .vscroll { width: 24px; padding: 25px 5px; }
.win-john .vscroll i { height: 66px; border-radius: 7px; }

.splitter {
    width: 8px;
    flex: none;
    background: #f4f4f4;
    border-left: 1px solid #e9e9e9;
}

.right {
    flex: 1;
    min-width: 0;
    display: flex;
    flex-direction: column;
    padding-bottom: 2px;
    background: #f9f9f9;
    font-family: var(--tahoma);
    font-size: var(--tree);
}

.win-john .right { padding-bottom: 4px; }

.panel-head {
    height: 50px;
    flex: none;
    display: flex;
    align-items: center;
    gap: 10px;
    padding: 0 30px 0 11px;
    background: #f0f0f0;
}

.panel-head svg { width: 30px; height: 30px; }
.panel-head h2 { flex: 1; font: 22px "Open Sans", sans-serif; }
.panel-head svg.pin { width: 9px; height: 13px; }
.panel-head svg.x { width: 9px; height: 9px; margin-left: 10px; stroke-width: 2; color: #555; }
.notes-head { height: 42px; margin-top: 7px; padding-right: 11px; }
.notes-head h2 { padding-left: 6px; }
.notes-head svg:first-child { width: 34px; height: 34px; }
.panel-head.notes-head svg.x { margin-left: 4px; }
.win-john .panel-head { height: 62px; }
.win-john .panel-head svg { width: 38px; height: 38px; }
.win-john .notes-head { height: 54px; margin-top: 4px; }

.event-form {
    position: relative;
    height: 67px;
    flex: none;
    display: grid;
    grid-template-columns: 104px 475px 1fr 20px;
    column-gap: 10px;
    padding-left: 11px;
    overflow: hidden;
}

.field { padding-top: 6px; }
.field label, .cut { display: block; line-height: 16px; }
.cut { grid-column: 1; grid-row: 2; padding-top: 3px; height: 13px; overflow: hidden; }

.field input {
    width: 100%;
    height: 28px;
    margin-top: 4px;
    border: 1px solid #cdcdcd;
    border-radius: 6px;
    background: #fff;
    padding: 0 7px;
}

.id input { background: #f0f0f0; color: #8a8a8a; text-align: right; }
.event-form .vscroll { grid-column: 4; grid-row: 1 / 3; height: 67px; }
.event-form .vscroll i { height: 21px; }
.win-john .event-form { height: 92px; }
.win-john .field { padding-top: 10px; }
.win-john .field input { height: 36px; }
.win-john .cut { height: 22px; }

.note-tools {
    height: 48px;
    flex: none;
    display: flex;
    align-items: center;
    justify-content: space-between;
    padding: 5px 14px 0 15px;
}

.note-tools label { display: flex; align-items: center; gap: 7px; }

.note-tools .switch {
    width: 51px;
    height: 19px;
    border: 1px solid #cfcfcf;
    border-radius: 10px;
    background: #f4f4f4 radial-gradient(circle at 9px 50%, #c9c9c9 8px, transparent 9px);
}

.note-tools button {
    display: flex;
    align-items: center;
    gap: 9px;
    width: 153px;
    height: 28px;
    padding-left: 8px;
    border: 1px solid #cfcfcf;
    border-radius: 5px;
    background: #e6e6e6;
    font-size: 12px;
}

.note-tools button svg { width: 21px; height: 21px; color: #3dbb6c; }
.win-john .note-tools { height: 59px; }
.win-john .note-tools .switch { width: 66px; height: 26px; border-radius: 13px; background: #f4f4f4 radial-gradient(circle at 12px 50%, #c9c9c9 11px, transparent 12px); }

.note {
    flex: 1;
    margin: 0 14px;
    padding: 18px 12px;
    background: #fff;
    color: #707070;
    font: 17px/24px "Liberation Sans", Arial, sans-serif;
}

.note h3 {
    display: flex;
    justify-content: space-between;
    font-size: 16px;
    color: #918fff;
    margin-bottom: 6px;
}

.note h3 a { color: #666; }
.win-john .note { margin-left: 17px; padding: 26px 16px; font-size: 22px; line-height: 31px; white-space: nowrap; }
.win-john .note h3 { font-size: 21px; margin-bottom: 8px; }

.count {
    flex: none;
    height: 32px;
    line-height: 25px;
    padding-left: 14px;
}

.win-john .count { height: 42px; line-height: 34px; padding-left: 17px; }

.filters {
    flex: none;
    display: flex;
    gap: 7px;
    padding-left: 13px;
    margin-bottom: 14px;
}

.filters button {
    display: flex;
    align-items: center;
    gap: 7px;
    width: 109px;
    height: 31px;
    padding-left: 8px;
    border: 1px solid #cdcdcd;
    border-radius: 6px;
    background: #fdfdfd;
}

.filters .square { width: 36px; margin-right: 2px; }
.filters svg { width: 25px; height: 25px; color: #8a8a8a; }
.win-john .filters { gap: 10px; padding-left: 17px; margin-bottom: 19px; }
.win-john .filters button { width: 140px; height: 39px; padding-left: 10px; gap: 11px; }
.win-john .filters .square { width: 47px; }
.win-john .filters svg { width: 32px; height: 32px; }

.tabs {
    flex: none;
    display: flex;
    height: 29px;
    background: #f0f0f0;
    border-top: 2px solid #d3d3d3;
    font-family: "Open Sans", sans-serif;
}

.tabs a {
    display: flex;
    align-items: center;
    gap: 2px;
    padding-left: 5px;
    width: 105px;
}

.tabs .active {
    width: 95px;
    gap: 4px;
    margin: -2px 0 2px;
    background: #fff;
    border: 1px solid #b9b9b9;
    border-top: 0;
}

.tabs svg { width: 20px; height: 20px; }
.tabs svg.x { width: 9px; height: 9px; margin-left: auto; margin-right: 6px; color: #555; }
.win-john .tabs { height: 35px; }
.win-john .tabs a { width: 133px; }
.win-john .tabs .active { width: 123px; }
.win-john .tabs svg { width: 26px; height: 26px; }
.win-john .tabs svg.x { width: 11px; height: 11px; margin-right: 9px; }

/* ---------- candidate window ---------- */
.results {
    width: 251px;
    flex: none;
    display: flex;
    flex-direction: column;
    padding: 0 7px 8px 5px;
    background: #f9f9f9;
    font-family: var(--tahoma);
}

.results h2 {
    height: 44px;
    margin: 0 -7px 0 -5px;
    padding-left: 6px;
    background: #f0f0f0;
    font: 18px/46px "Open Sans", sans-serif;
}

.results h2 svg { width: 8px; height: 11px; margin-left: 8px; }

.move {
    display: flex;
    align-items: center;
    gap: 7px;
    height: 43px;
    flex: none;
    padding-left: 9px;
    border: 1px solid #cfcfcf;
    border-radius: 4px;
    background: #e6e6e6;
}

.move svg { width: 30px; height: 30px; fill: #fff; color: #3c97d8; }

.grid-box {
    flex: 1;
    display: flex;
    flex-direction: column;
    margin-top: 6px;
    border: 1px solid #cdcdcd;
    background: #fdfdfd;
    overflow: hidden;
}

.group-hint {
    height: 39px;
    margin: 4px 6px 0;
    padding-left: 2px;
    line-height: 26px;
    background: #f4f4f4;
    white-space: nowrap;
}

.grid-box table {
    width: 100%;
    table-layout: fixed;
    border-collapse: collapse;
}

.grid-box th, .grid-box td {
    height: 26px;
    padding: 0 5px;
    border: 1px solid #cdcdcd;
    font-weight: normal;
    text-align: left;
    white-space: nowrap;
    overflow: hidden;
}

.grid-box th { height: 30px; background: #f4f4f4; }
.grid-box .filter td { height: 28px; color: #777; border-bottom-color: #999; }
.grid-box .corner { width: 33px; }
.grid-box th:nth-child(2) { width: 78px; }
.grid-box .num { text-align: right; }
.grid-box .rowhead, .grid-box .alt td { background: #f4f4f4; }
.grid-box td svg { width: 16px; height: 16px; float: right; color: #2d62b0; }
.grid-box .corner i { display: block; margin-left: 3px; border-left: 18px solid transparent; border-bottom: 18px solid #c6c6c6; }

.hscroll {
    position: relative;
    height: 18px;
    margin: auto 1px 1px;
    padding: 5px 18px;
    background: #f0f0f0;
}

.hscroll i { display: block; width: 27px; height: 9px; border-radius: 4px; background: #cbcbcb; }

.hscroll::before, .hscroll::after {
    content: "";
    position: absolute;
    top: 5px;
    left: 6px;
    border: 4px solid transparent;
    border-left-width: 0;
    border-right: 5px solid #6b6b6b;
}

.hscroll::after {
    left: auto;
    right: 6px;
    border-right-width: 0;
    border-left: 5px solid #6b6b6b;
}

.details {
    flex: 1;
    min-width: 0;
    display: flex;
    flex-direction: column;
    margin-top: 3px;
    padding: 12px 1px 0 0;
    background: #f9f9f9;
    font-family: var(--tahoma);
}

.ident {
    display: grid;
    grid-template-columns: 101px 91px 94px 235px 1fr 149px;
    column-gap: 7px;
    padding-right: 2px;
    line-height: 20px;
    text-align: right;
}

.ident.second {
    grid-template-columns: 101px 113px 1fr;
    margin-top: 4px;
}

.ident strong { font-size: 13px; text-align: left; line-height: 23px; padding-left: 21px; white-space: nowrap; }
.pair { display: flex; gap: 2px; text-align: left; }

.details input, .namebox {
    width: 100%;
    min-width: 0;
    height: 24px;
    padding: 0 5px;
    border: 1px solid #3f9ad8;
    border-radius: 5px;
    background: #fff;
}

.details input[readonly], .namebox { background: #f0f0f0; }
.details input.num { text-align: right; }
.namebox { line-height: 21px; flex: 1; }
.namebox mark { background: #0078d7; color: #fff; padding: 1px; }

.pair button, .addr-side button {
    width: 23px;
    border: 1px solid #d0d0d0;
    border-radius: 5px;
    background: #fdfdfd;
    color: #555;
    padding-top: 2px;
}

.pair svg { width: 17px; height: 17px; }
.pair .sky { color: #a5d4ee; }

.main-tabs, .sub-tabs {
    display: flex;
    gap: 12px;
    height: 35px;
    flex: none;
    align-items: center;
    margin-left: 6px;
    border-bottom: 1px solid #cfcfcf;
    font-family: "Open Sans", sans-serif;
}

.main-tabs { margin-top: 3px; }
.main-tabs a { display: flex; align-items: center; gap: 3px; height: 100%; }
.main-tabs .active { padding: 0 6px; gap: 5px; margin-right: -6px; }
.main-tabs svg { width: 24px; height: 24px; color: #555; }
.main-tabs .active svg, .main-tabs .active { color: #1a62c5; }
.main-tabs .active svg { color: #3c97d8; width: 22px; }
.main-tabs .pay svg { color: #ef5350; }
.main-tabs .active, .sub-tabs .active { border-bottom: 3px solid #2a62b8; }

.sub-tabs {
    height: 29px;
    gap: 15px;
    padding-left: 10px;
    align-items: stretch;
    line-height: 29px;
}

.sub-tabs .active { color: #1a62c5; }

.profile {
    flex: 1;
    display: grid;
    grid-template-columns: 472px 1fr;
    column-gap: 6px;
}

.form {
    position: relative;
    display: grid;
    grid-template-columns: 124px 138px 1fr;
    grid-auto-rows: 23px;
    gap: 5px 6px;
    align-content: start;
    padding: 13px 4px 0 0;
    text-align: right;
}

.form label { line-height: 18px; }
.form .wide { grid-column: 2 / 4; }

.details select {
    appearance: none;
    height: 23px;
    padding: 0 2px;
    border: 2px solid #3f9ad8;
    border-radius: 0;
    background: #fff url("data:image/svg+xml,%3Csvg xmlns='http://www.w3.org/2000/svg' viewBox='0 0 10 6'%3E%3Cpath d='M1 1l4 4 4-4' fill='none' stroke='%23888'/%3E%3C/svg%3E") no-repeat right 6px center / 8px 5px;
}

.details select:disabled { background-color: #f0f0f0; color: #8a8a8a; opacity: 1; }

.two { display: grid; grid-template-columns: 76px 57px; gap: 5px; }

.photo {
    grid-column: 3;
    grid-row: 2 / 8;
    height: 190px;
    margin-left: 2px;
    padding: 0 12px;
    border: 2px solid #e4e4e4;
    border-bottom: 0;
}

.photo div { height: 100%; background: #fff; padding-top: 22px; overflow: hidden; }
.photo i, .photo b { display: block; width: 67px; height: 67px; margin: 0 auto; border-radius: 50%; background: #cbcbcb; }
.photo b { width: 100px; height: 100px; margin-top: 6px; }

.coords .sub-tabs { height: 32px; margin-left: 0; padding-left: 7px; padding-top: 3px; line-height: 28px; gap: 14px; }

.coords h4 {
    display: flex;
    align-items: center;
    gap: 4px;
    padding-left: 9px;
    line-height: 16px;
    margin: 6px 0 2px;
    font-weight: bold;
    color: #666;
}

.coords h4::after { content: ""; flex: 1; border-top: 2px solid #a5a5a5; }

.addr-row { display: grid; grid-template-columns: 227px 1fr; padding-left: 9px; gap: 6px; }
.addr-list { display: flex; height: 150px; padding: 2px; border: 1px solid #cdcdcd; }
.items { flex: 1; }

.item {
    height: 88px;
    margin: 0 2px;
    padding: 4px 0 0 27px;
    border-left: 4px solid #a9d8ae;
    background: #e6e6e6;
    line-height: 15px;
    white-space: nowrap;
}

.more { display: flex; gap: 6px; margin: 4px 6px; padding: 7px 5px; border-top: 2px solid #cfcfcf; font-weight: bold; white-space: nowrap; }
.more svg { width: 14px; height: 14px; color: #3dbb6c; }
.addr-list .vscroll { padding: 17px 5px; }
.addr-list .vscroll i { height: 66px; }
.addr-list .vscroll::after { display: none; }

.addr-side { display: grid; grid-template-columns: 31px 31px; gap: 6px; align-content: start; line-height: 16px; }
.addr-side button { width: 31px; height: 34px; }
.addr-side svg { width: 24px; height: 26px; }
.addr-side p { grid-column: 1 / 3; margin-left: -4px; }
.addr-side button.pill { grid-column: 1 / 3; width: 80px; height: 18px; margin: -2px 0 0 -2px; padding: 0 0 0 15px; border: 0; border-radius: 9px; text-align: left; color: #d8e8f4; line-height: 18px; background: #9bc1df radial-gradient(circle at 72px 50%, #a3b4c2 8px, transparent 9px); }
.addr-side button.off { background: #ddd radial-gradient(circle at 9px 50%, #bbb 8px, transparent 9px); }

/* ---------- step markers ---------- */
.badge {
    position: absolute;
    z-index: 2;
    width: 61px;
    height: 61px;
    margin: -30px 0 0 -30px;
    border: 4px solid #1d4668;
    border-radius: 50%;
    background: #4093b3;
    color: #fff;
    font-size: 34px;
    font-weight: bold;
    line-height: 56px;
    text-align: center;
}

.b2 { left: 482px; top: 689px; }
.b3 { left: 497px; top: 342px; }
.b4 { left: 876px; top: 192px; }
.b5 { left: 1158px; top: 752px; }

.arrow {
    position: absolute;
    left: 556px;
    top: 246px;
    width: 80px;
    height: 90px;
    stroke: #1d4668;
    stroke-width: 5;
}

.arrow .tip { fill: #1d4668; stroke: none; }
```
